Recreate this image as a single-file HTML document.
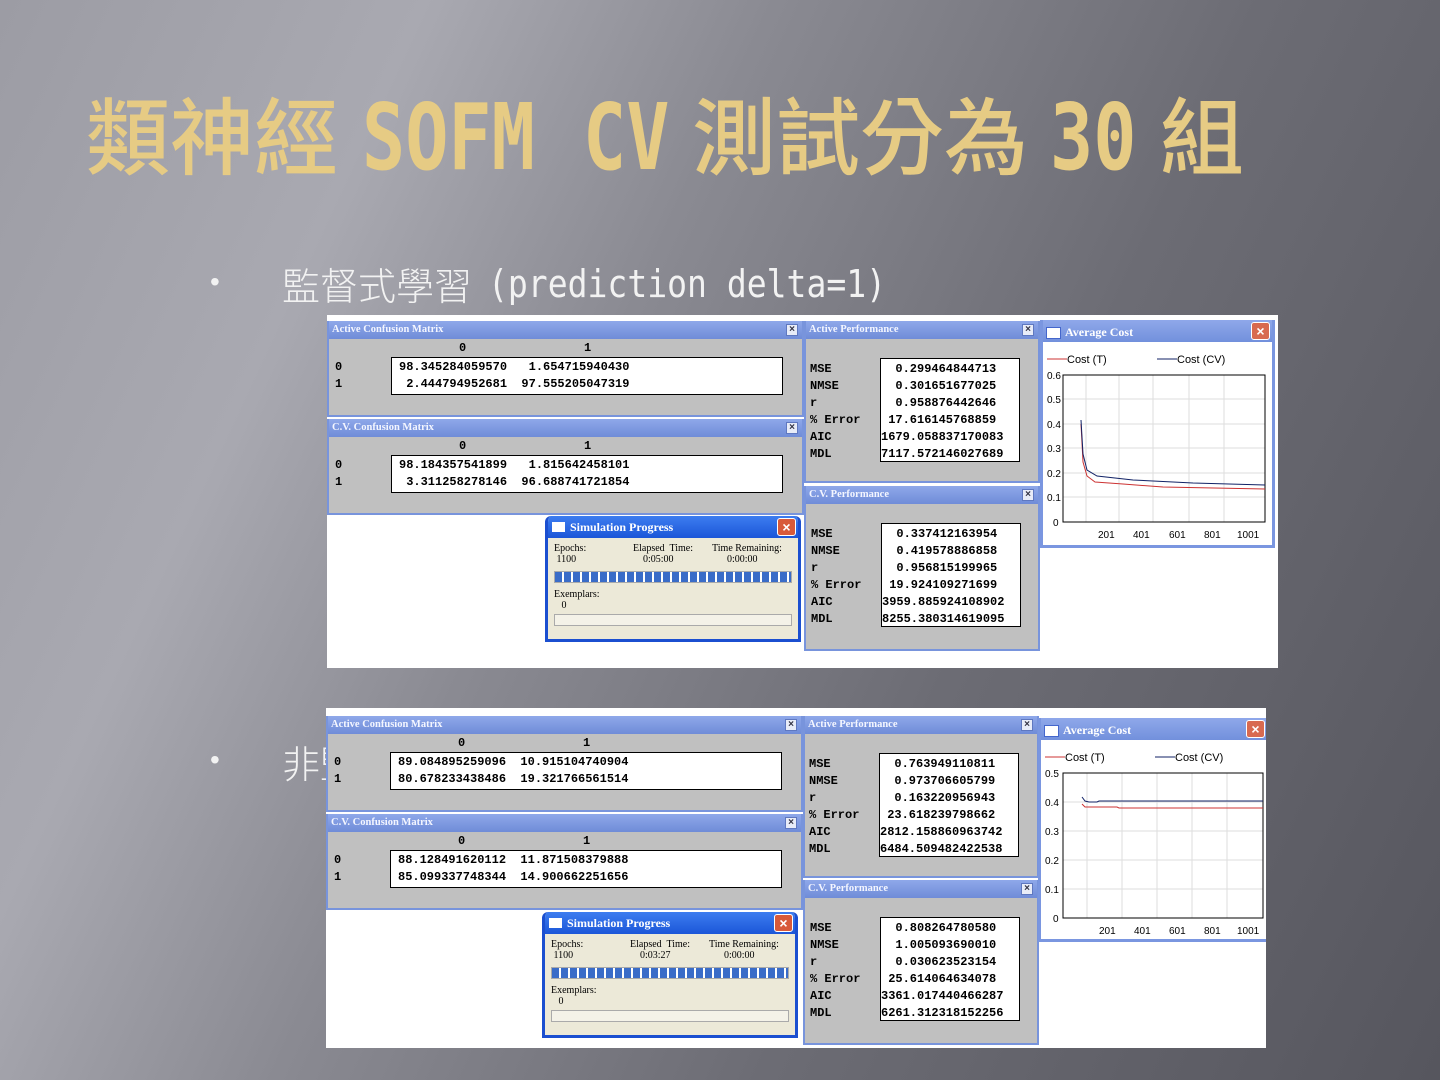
<!DOCTYPE html>
<html><head><meta charset="utf-8"><style>
*{margin:0;padding:0;box-sizing:border-box}
body{width:1440px;height:1080px;overflow:hidden;position:relative;
background:linear-gradient(115deg,#9c9ca4 0%,#a9a9b1 22%,#8a8a92 40%,#6c6c74 65%,#56565e 100%);
font-family:"Liberation Sans","Noto Sans CJK TC",sans-serif}
.t{position:absolute;color:#e6cb84;font-weight:bold;white-space:nowrap}
.cj{font-family:"Noto Sans CJK TC","WenQuanYi Zen Hei",sans-serif;font-size:84px;top:72px;font-weight:500}
.la{font-family:"DejaVu Sans Mono","Liberation Mono",monospace;font-size:92px;top:84px;transform-origin:0 0;transform:scaleX(.78)}
.b{position:absolute;color:#f2f2f2;white-space:nowrap}
.shot{position:absolute;background:#fff;overflow:hidden}
.win{position:absolute;background:#c0c0c0;border:2px solid #7894dc;border-top:none}
.tb{height:18px;background:linear-gradient(#8fa8ea,#6f8cd8);color:#f4f6ff;font:bold 10.5px "Liberation Serif",serif;line-height:18px;padding-left:3px;white-space:nowrap;position:relative}
.x{position:absolute;right:4px;top:3px;width:12px;height:12px;background:#e8ecf8;border:1px solid #5f78c0;font:bold 10px/10px "Liberation Sans";color:#334;text-align:center}
.m{font:bold 12px "Liberation Mono",monospace;color:#000;position:absolute;white-space:pre}
.box{position:absolute;background:#fff;border:1px solid #000}
.sim{position:absolute;background:#ece9d8;border:3px solid #1b4fd0;border-top:none;border-radius:6px 6px 0 0;overflow:hidden}
.stb{height:22px;background:linear-gradient(#3d7df0,#1b56d8);color:#fff;font:bold 12px "Liberation Serif",serif;line-height:22px;padding-left:22px;position:relative}
.stb:before{content:"";position:absolute;left:4px;top:6px;width:13px;height:10px;background:#fff}
.sx{position:absolute;right:2px;top:2px;width:19px;height:18px;background:#d85a3a;border:1px solid #fff;border-radius:3px;color:#fff;font:bold 14px/16px "Liberation Sans";text-align:center}
.s{position:absolute;font:10px "Liberation Serif",serif;color:#000;white-space:pre}
.pb{position:absolute;height:12px;background:repeating-linear-gradient(90deg,#3a6cc8 0 7px,#fff 7px 9px);border:1px solid #aaa}
.ac{position:absolute;background:#fff;border:3px solid #7a96e0;border-top:none}
.atb{height:22px;background:linear-gradient(#8fa8ea,#7290dc);color:#fff;font:bold 12px "Liberation Serif",serif;line-height:24px;padding-left:22px;position:relative}
.atb:before{content:"";position:absolute;left:3px;top:7px;width:13px;height:10px;background:#fff;border:1px solid #46c}
</style></head><body>

<div class="t cj" style="left:86px">類神經</div>
<div class="t la" style="left:362px">SOFM</div>
<div class="t la" style="left:583px">CV</div>
<div class="t cj" style="left:692px">測試分為</div>
<div class="t la" style="left:1050px">30</div>
<div class="t cj" style="left:1160px">組</div>

<div class="b" style="left:210px;top:266px;font-size:28px">•</div>
<div class="b" style="left:282px;top:256px;font-size:38px;font-family:'Noto Sans CJK TC',sans-serif;font-weight:300">監督式學習</div>
<div class="b" style="left:488px;top:262px;font-size:38px;font-family:'DejaVu Sans Mono',monospace;transform-origin:0 0;transform:scaleX(.87)">(prediction delta=1)</div>
<div class="b" style="left:210px;top:744px;font-size:28px">•</div>
<div class="b" style="left:282px;top:734px;font-size:38px;font-family:'Noto Sans CJK TC',sans-serif;font-weight:300">非監</div>

<!-- SHOT 1 -->
<div class="shot" style="left:327px;top:315px;width:951px;height:353px">
 <div class="win" style="left:0;top:6px;width:477px;height:96px"><div class="tb">Active Confusion Matrix<div class="x">×</div></div>
  <div class="m" style="left:130px;top:20px">0</div><div class="m" style="left:255px;top:20px">1</div>
  <div class="m" style="left:6px;top:39px">0</div><div class="m" style="left:6px;top:56px">1</div>
  <div class="box" style="left:62px;top:36px;width:392px;height:38px"></div>
  <div class="m" style="left:70px;top:39px">98.345284059570   1.654715940430</div>
  <div class="m" style="left:70px;top:56px"> 2.444794952681  97.555205047319</div>
 </div>
 <div class="win" style="left:0;top:104px;width:477px;height:96px"><div class="tb">C.V. Confusion Matrix<div class="x">×</div></div>
  <div class="m" style="left:130px;top:20px">0</div><div class="m" style="left:255px;top:20px">1</div>
  <div class="m" style="left:6px;top:39px">0</div><div class="m" style="left:6px;top:56px">1</div>
  <div class="box" style="left:62px;top:36px;width:392px;height:38px"></div>
  <div class="m" style="left:70px;top:39px">98.184357541899   1.815642458101</div>
  <div class="m" style="left:70px;top:56px"> 3.311258278146  96.688741721854</div>
 </div>
 <div class="win" style="left:477px;top:6px;width:236px;height:162px"><div class="tb">Active Performance<div class="x">×</div></div>
  <div class="box" style="left:74px;top:37px;width:140px;height:104px"></div>
  <div class="m" style="left:4px;top:40px;line-height:17px">MSE
NMSE
r
% Error
AIC
MDL</div>
  <div class="m" style="left:75px;top:40px;line-height:17px">  0.299464844713
  0.301651677025
  0.958876442646
 17.616145768859
1679.058837170083
7117.572146027689</div>
 </div>
 <div class="win" style="left:477px;top:171px;width:236px;height:165px"><div class="tb">C.V. Performance<div class="x">×</div></div>
  <div class="box" style="left:75px;top:37px;width:140px;height:104px"></div>
  <div class="m" style="left:5px;top:40px;line-height:17px">MSE
NMSE
r
% Error
AIC
MDL</div>
  <div class="m" style="left:76px;top:40px;line-height:17px">  0.337412163954
  0.419578886858
  0.956815199965
 19.924109271699
3959.885924108902
8255.380314619095</div>
 </div>
 <div class="ac" style="left:713px;top:5px;width:235px;height:228px"><div class="atb">Average Cost<div class="sx" style="background:#d86a50">×</div></div>
  <svg width="229" height="206" style="position:absolute;left:0;top:22px" font-family="Liberation Sans" font-size="11">
   <line x1="4" y1="17" x2="24" y2="17" stroke="#c33"/><text x="24" y="21">Cost (T)</text>
   <line x1="114" y1="17" x2="134" y2="17" stroke="#126"/><text x="134" y="21">Cost (CV)</text>
   <g stroke="#ddd"><line x1="43" y1="33" x2="43" y2="180"/><line x1="76" y1="33" x2="76" y2="180"/><line x1="110" y1="33" x2="110" y2="180"/><line x1="146" y1="33" x2="146" y2="180"/><line x1="181" y1="33" x2="181" y2="180"/><line x1="20" y1="57" x2="222" y2="57"/><line x1="20" y1="82" x2="222" y2="82"/><line x1="20" y1="106" x2="222" y2="106"/><line x1="20" y1="131" x2="222" y2="131"/><line x1="20" y1="155" x2="222" y2="155"/></g>
   <rect x="20" y="33" width="202" height="147" fill="none" stroke="#000"/>
   <g font-size="10"><text x="4" y="37">0.6</text><text x="4" y="61">0.5</text><text x="4" y="86">0.4</text><text x="4" y="110">0.3</text><text x="4" y="135">0.2</text><text x="4" y="159">0.1</text><text x="10" y="184">0</text>
   <text x="55" y="196">201</text><text x="90" y="196">401</text><text x="126" y="196">601</text><text x="161" y="196">801</text><text x="194" y="196">1001</text></g>
   <path d="M38 82 L40 120 L44 134 L52 140 L80 142 L120 145 L222 147" fill="none" stroke="#c33"/>
   <path d="M38 78 L40 112 L44 128 L54 134 L90 138 L150 141 L222 143" fill="none" stroke="#126"/>
  </svg>
 </div>
 <div class="sim" style="left:218px;top:201px;width:256px;height:126px"><div class="stb">Simulation Progress<div class="sx">×</div></div>
  <div class="s" style="left:6px;top:27px;line-height:11px">Epochs:
 1100</div>
  <div class="s" style="left:85px;top:27px;line-height:11px">Elapsed  Time:
    0:05:00</div>
  <div class="s" style="left:164px;top:27px;line-height:11px">Time Remaining:
      0:00:00</div>
  <div class="pb" style="left:6px;top:55px;width:238px"></div>
  <div class="s" style="left:6px;top:73px;line-height:11px">Exemplars:
   0</div>
  <div class="pb" style="left:6px;top:98px;width:238px;background:#f4f2e8"></div>
 </div>
</div>

<!-- SHOT 2 -->
<div class="shot" style="left:326px;top:708px;width:940px;height:340px">
 <div class="win" style="left:0;top:8px;width:477px;height:96px"><div class="tb">Active Confusion Matrix<div class="x">×</div></div>
  <div class="m" style="left:130px;top:20px">0</div><div class="m" style="left:255px;top:20px">1</div>
  <div class="m" style="left:6px;top:39px">0</div><div class="m" style="left:6px;top:56px">1</div>
  <div class="box" style="left:62px;top:36px;width:392px;height:38px"></div>
  <div class="m" style="left:70px;top:39px">89.084895259096  10.915104740904</div>
  <div class="m" style="left:70px;top:56px">80.678233438486  19.321766561514</div>
 </div>
 <div class="win" style="left:0;top:106px;width:477px;height:96px"><div class="tb">C.V. Confusion Matrix<div class="x">×</div></div>
  <div class="m" style="left:130px;top:20px">0</div><div class="m" style="left:255px;top:20px">1</div>
  <div class="m" style="left:6px;top:39px">0</div><div class="m" style="left:6px;top:56px">1</div>
  <div class="box" style="left:62px;top:36px;width:392px;height:38px"></div>
  <div class="m" style="left:70px;top:39px">88.128491620112  11.871508379888</div>
  <div class="m" style="left:70px;top:56px">85.099337748344  14.900662251656</div>
 </div>
 <div class="win" style="left:477px;top:8px;width:236px;height:162px"><div class="tb">Active Performance<div class="x">×</div></div>
  <div class="box" style="left:74px;top:37px;width:140px;height:104px"></div>
  <div class="m" style="left:4px;top:40px;line-height:17px">MSE
NMSE
r
% Error
AIC
MDL</div>
  <div class="m" style="left:75px;top:40px;line-height:17px">  0.763949110811
  0.973706605799
  0.163220956943
 23.618239798662
2812.158860963742
6484.509482422538</div>
 </div>
 <div class="win" style="left:477px;top:172px;width:236px;height:165px"><div class="tb">C.V. Performance<div class="x">×</div></div>
  <div class="box" style="left:75px;top:37px;width:140px;height:104px"></div>
  <div class="m" style="left:5px;top:40px;line-height:17px">MSE
NMSE
r
% Error
AIC
MDL</div>
  <div class="m" style="left:76px;top:40px;line-height:17px">  0.808264780580
  1.005093690010
  0.030623523154
 25.614064634078
3361.017440466287
6261.312318152256</div>
 </div>
 <div class="ac" style="left:712px;top:10px;width:232px;height:224px"><div class="atb">Average Cost<div class="sx" style="background:#d86a50">×</div></div>
  <svg width="229" height="202" style="position:absolute;left:0;top:22px" font-family="Liberation Sans" font-size="11">
   <line x1="4" y1="17" x2="24" y2="17" stroke="#c33"/><text x="24" y="21">Cost (T)</text>
   <line x1="114" y1="17" x2="134" y2="17" stroke="#126"/><text x="134" y="21">Cost (CV)</text>
   <g stroke="#ddd"><line x1="46" y1="33" x2="46" y2="178"/><line x1="81" y1="33" x2="81" y2="178"/><line x1="116" y1="33" x2="116" y2="178"/><line x1="151" y1="33" x2="151" y2="178"/><line x1="186" y1="33" x2="186" y2="178"/><line x1="22" y1="62" x2="222" y2="62"/><line x1="22" y1="91" x2="222" y2="91"/><line x1="22" y1="120" x2="222" y2="120"/><line x1="22" y1="149" x2="222" y2="149"/></g>
   <rect x="22" y="33" width="200" height="145" fill="none" stroke="#000"/>
   <g font-size="10"><text x="4" y="37">0.5</text><text x="4" y="66">0.4</text><text x="4" y="95">0.3</text><text x="4" y="124">0.2</text><text x="4" y="153">0.1</text><text x="12" y="182">0</text>
   <text x="58" y="194">201</text><text x="93" y="194">401</text><text x="128" y="194">601</text><text x="163" y="194">801</text><text x="196" y="194">1001</text></g>
   <path d="M41 64 L44 67 L60 67 L76 67 L78 68 L222 68" fill="none" stroke="#c33"/>
   <path d="M41 57 L44 61 L48 62 L56 62 L58 61 L222 61" fill="none" stroke="#126"/>
  </svg>
 </div>
 <div class="sim" style="left:216px;top:204px;width:256px;height:126px"><div class="stb">Simulation Progress<div class="sx">×</div></div>
  <div class="s" style="left:6px;top:27px;line-height:11px">Epochs:
 1100</div>
  <div class="s" style="left:85px;top:27px;line-height:11px">Elapsed  Time:
    0:03:27</div>
  <div class="s" style="left:164px;top:27px;line-height:11px">Time Remaining:
      0:00:00</div>
  <div class="pb" style="left:6px;top:55px;width:238px"></div>
  <div class="s" style="left:6px;top:73px;line-height:11px">Exemplars:
   0</div>
  <div class="pb" style="left:6px;top:98px;width:238px;background:#f4f2e8"></div>
 </div>
</div>
</body></html>
